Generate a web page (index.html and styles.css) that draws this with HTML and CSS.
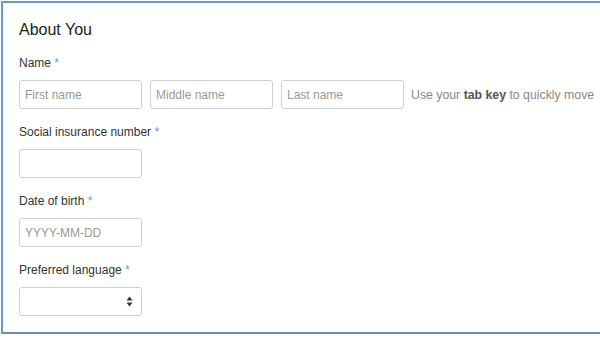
FILE: index.html
```html
<!DOCTYPE html>
<html lang="en">
<head>
  <meta charset="UTF-8">
  <title>About You</title>
  <link rel="stylesheet" href="styles.css">
</head>
<body>

<div class="panel">
  <h2>About You</h2>

  <div class="field">
    <label>Name <span class="req">*</span></label>
    <div class="row">
      <input type="text" placeholder="First name">
      <input type="text" placeholder="Middle name">
      <input type="text" placeholder="Last name">
      <span class="hint">Use your <b>tab key</b> to quickly move</span>
    </div>
  </div>

  <div class="field">
    <label>Social insurance number <span class="req">*</span></label>
    <input type="text">
  </div>

  <div class="field">
    <label>Date of birth <span class="req">*</span></label>
    <input type="text" placeholder="YYYY-MM-DD">
  </div>

  <div class="field">
    <label>Preferred language <span class="req">*</span></label>
    <div class="select-wrap">
      <select>
        <option></option>
        <option>English</option>
        <option>Français</option>
      </select>
      <svg class="arrows" width="7" height="11" viewBox="0 0 7 11">
        <path d="M3.5 0.5 L6.5 4.5 L0.5 4.5 Z" fill="#333"/>
        <path d="M3.5 10.5 L6.5 6.5 L0.5 6.5 Z" fill="#333"/>
      </svg>
    </div>
  </div>
</div>

</body>
</html>
```

FILE: styles.css
```css
* {
  margin: 0;
  padding: 0;
  box-sizing: border-box;
}

body {
  font-family: "Liberation Sans", Arial, sans-serif;
  background: #fff;
  overflow: hidden;
  width: 600px;
  height: 341px;
}

.panel {
  margin: 1px 0 0 1px;
  width: 640px;
  border: 2px solid #5d9fcf;
  border-bottom-color: #6a8fa9;
  padding: 16px 16px 16px 16px;
}

h2 {
  font-size: 16px;
  font-weight: 400;
  color: #222;
  line-height: 21px;
  margin-bottom: 15px;
}

.field {
  margin-bottom: 15px;
}

.field:last-child {
  margin-bottom: 0;
}

label {
  display: block;
  font-size: 12px;
  line-height: 16px;
  color: #333;
  margin-bottom: 9px;
}

.req {
  color: #5d9fcf;
}

.row {
  display: flex;
  align-items: center;
  gap: 8px;
  white-space: nowrap;
}

input,
select {
  width: 123px;
  height: 29px;
  border: 1px solid #cfcfcf;
  border-radius: 3px;
  padding: 0 5px;
  font-family: inherit;
  font-size: 12px;
  color: #333;
  background: #fff;
  outline: none;
  flex-shrink: 0;
}

input::placeholder {
  color: #999;
}

.hint {
  font-size: 12.3px;
  color: #888;
  margin-left: -1px;
}

.hint b {
  color: #555;
}

.select-wrap {
  position: relative;
  width: 123px;
}

select {
  appearance: none;
  -webkit-appearance: none;
  display: block;
}

.arrows {
  position: absolute;
  right: 9px;
  top: 9px;
  pointer-events: none;
}
```
